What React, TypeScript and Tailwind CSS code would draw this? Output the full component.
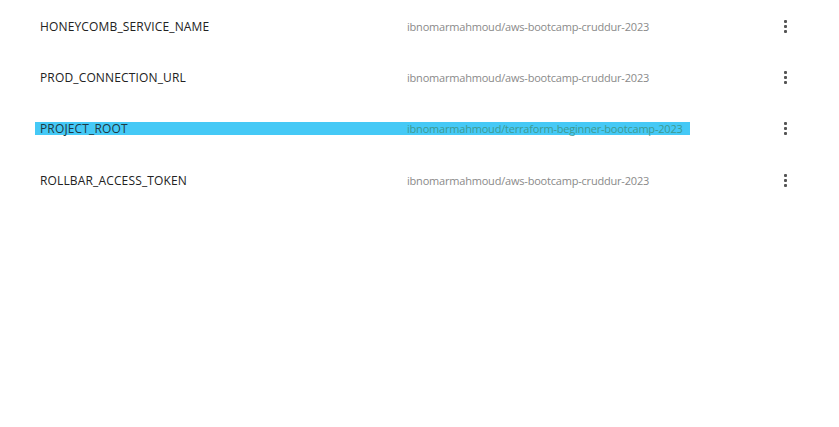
export default function App() {
  const rows = [
    { k: "HONEYCOMB_SERVICE_NAME", v: "ibnomarmahmoud/aws-bootcamp-cruddur-2023", sel: false },
    { k: "PROD_CONNECTION_URL", v: "ibnomarmahmoud/aws-bootcamp-cruddur-2023", sel: false },
    { k: "PROJECT_ROOT", v: "ibnomarmahmoud/terraform-beginner-bootcamp-2023", sel: true },
    { k: "ROLLBAR_ACCESS_TOKEN", v: "ibnomarmahmoud/aws-bootcamp-cruddur-2023", sel: false },
  ];
  return (
    <div className="w-[839px] h-[427px] bg-white" style={{ fontFamily: '"Open Sans", "Noto Sans", sans-serif' }}>
      <div className="flex flex-col pt-[1px]">
        {rows.map((r) => (
          <div key={r.k} className="flex items-center h-[51.2px] pl-[35px]">
            <div className={`flex items-center h-[13px] w-[655px] ${r.sel ? "bg-[#45c9f6]" : ""}`}>
              <div className={`w-[372px] pl-[5px] pt-[1px] text-[12px] leading-none tracking-[0.15px] ${r.sel ? "text-[#1f3a44]" : "text-[#222]"}`}>{r.k}</div>
              <div className={`text-[11px] leading-none tracking-[-0.2px] ${r.sel ? "text-[#3d9a92]" : "text-[#8a8a8a]"}`}>{r.v}</div>
            </div>
            <div className="ml-auto mr-[52px] flex flex-col gap-[2px]">
              <span className="block w-[3px] h-[3px] bg-[#555] rounded-[1px]" />
              <span className="block w-[3px] h-[3px] bg-[#555] rounded-[1px]" />
              <span className="block w-[3px] h-[3px] bg-[#555] rounded-[1px]" />
            </div>
          </div>
        ))}
      </div>
    </div>
  );
}
